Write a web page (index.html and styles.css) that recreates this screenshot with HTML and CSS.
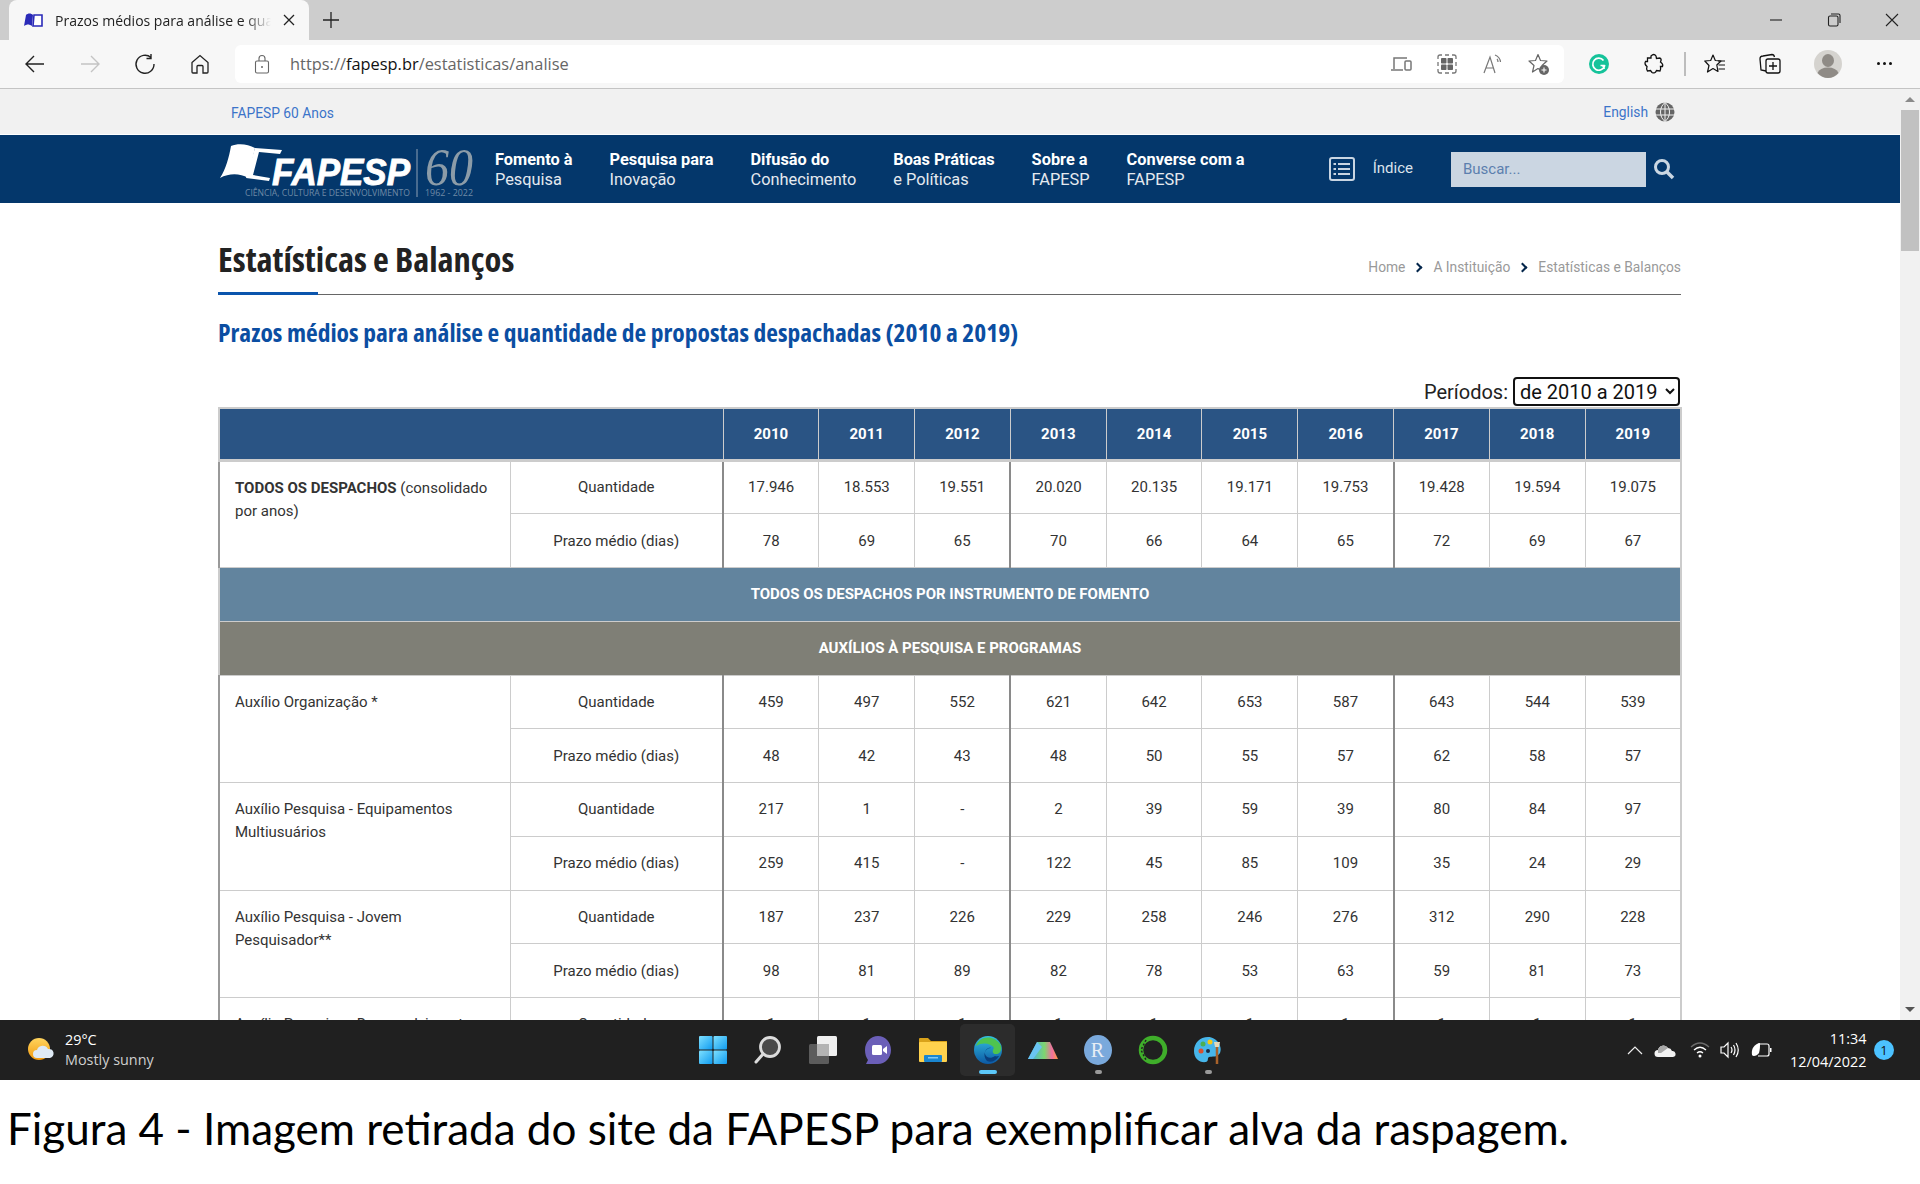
FILE: index.html
```html
<!DOCTYPE html>
<html lang="pt-BR">
<head>
  <meta charset="UTF-8" />
  <title>Prazos médios para análise e quantidade de propostas despachadas</title>
  <link rel="stylesheet" href="styles.css">
</head>
<body>
  <div class="tabstrip">
    <div class="tab">
      <svg class="favicon" viewBox="0 0 20 16"><path d="M1 14 3 3C5 1 8 1 10 3L9 14C6 12 4 12 1 14Z" fill="#2a2ab8"/><path d="M11 3H19V14H10Z" fill="#fff" stroke="#2a2ab8" stroke-width="1.6"/></svg>
      <span class="tab-title">Prazos médios para análise e quantidade</span>
      <svg class="ico12" viewBox="0 0 12 12"><path d="M1 1 11 11M11 1 1 11" stroke="#222" stroke-width="1.3"/></svg>
    </div>
    <svg class="newtab" viewBox="0 0 18 18"><path d="M9 1V17M1 9H17" stroke="#222" stroke-width="1.3"/></svg>
    <div class="win-btns">
      <svg class="ico14" viewBox="0 0 14 14"><path d="M1 7H13" stroke="#222" stroke-width="1.1"/></svg>
      <svg class="ico14" viewBox="0 0 14 14"><rect x="1.5" y="3" width="9.5" height="10" rx="1.5" fill="none" stroke="#222" stroke-width="1.1"/><path d="M4 1H11.5Q13 1 13 2.5V10" fill="none" stroke="#222" stroke-width="1.1"/></svg>
      <svg class="ico14" viewBox="0 0 14 14"><path d="M1 1 13 13M13 1 1 13" stroke="#222" stroke-width="1.1"/></svg>
    </div>
  </div>

  <div class="toolbar">
    <div class="nav-btns">
      <svg class="ico22" viewBox="0 0 22 22"><path d="M20 11H2M10 3 2 11 10 19" fill="none" stroke="#222" stroke-width="1.4"/></svg>
      <svg class="ico22" viewBox="0 0 22 22"><path d="M2 11H20M12 3 20 11 12 19" fill="none" stroke="#c4c4c4" stroke-width="1.4"/></svg>
      <svg class="ico22" viewBox="0 0 22 22"><path d="M17 4.5A9 9 0 1 0 20 11M17 1V5.5H12.5" fill="none" stroke="#222" stroke-width="1.4"/></svg>
      <svg class="ico22" viewBox="0 0 22 22"><path d="M3 9.5 11 2.5 19 9.5V19Q19 20 18 20H14V13.5Q14 12.5 13 12.5H9Q8 12.5 8 13.5V20H4Q3 20 3 19Z" fill="none" stroke="#222" stroke-width="1.3"/></svg>
    </div>
    <div class="addressbar">
      <svg class="lock" viewBox="0 0 16 20"><rect x="1.5" y="7" width="13" height="12" rx="1.5" fill="none" stroke="#666" stroke-width="1.1"/><path d="M5 7V4.5A3 3 0 0 1 11 4.5V7" fill="none" stroke="#666" stroke-width="1.1"/><circle cx="8" cy="13" r="1" fill="#666"/></svg>
      <span class="url">https://<b>fapesp.br</b>/estatisticas/analise</span>
      <div class="bar-icons">
        <svg class="ico22" viewBox="0 0 22 22"><path d="M4 16V5H17M1 17H13" fill="none" stroke="#777" stroke-width="1.5"/><rect x="15" y="8" width="6" height="9" rx="1" fill="none" stroke="#777" stroke-width="1.5"/></svg>
        <svg class="ico22" viewBox="0 0 22 22"><path d="M6 2H4Q2 2 2 4V6M16 2H18Q20 2 20 4V6M6 20H4Q2 20 2 18V16M16 20H18Q20 20 20 18V16M2 9V13M20 9V13M9 2H13M9 20H13" fill="none" stroke="#777" stroke-width="1.3"/><rect x="5" y="5" width="5.5" height="5.500" rx=".8" fill="#666"/><rect x="11.500" y="5" width="5.500" height="5.500" rx=".8" fill="#666"/><rect x="5" y="11.500" width="5.500" height="5.500" rx=".8" fill="#666"/><rect x="11.500" y="11.500" width="5.500" height="5.500" rx=".8" fill="#666"/></svg>
        <svg class="ico22" viewBox="0 0 22 22"><path d="M2 20 8 4 13 20M4 15H12" fill="none" stroke="#777" stroke-width="1.2"/><path d="M13 2Q18 4 18.500 9M15 6Q16 7 16 9" fill="none" stroke="#777" stroke-width="1.2"/></svg>
        <svg class="ico22" viewBox="0 0 22 22"><path d="M10 1.500 12.500 7.500 19 8 14 12.500 15.500 19 10 15.500 4.500 19 6 12.500 1 8 7.500 7.500Z" fill="#fff" stroke="#666" stroke-width="1.2" stroke-linejoin="round"/><circle cx="16" cy="17" r="5" fill="#666"/><path d="M16 14.500V19.500M13.500 17H18.500" stroke="#fff" stroke-width="1.1"/></svg>
      </div>
    </div>
    <div class="tool-icons">
      <svg class="ico22 grammarly" viewBox="0 0 22 22"><circle cx="11" cy="11" r="10" fill="#15c39a"/><path d="M15.500 7.500A6 6 0 1 0 16.500 13L14 13M16 16V12.500H12.500" fill="none" stroke="#fff" stroke-width="1.7"/></svg>
      <svg class="ico22 puzzle" viewBox="0 0 22 22"><path d="M8 3Q11 0 13 3L13.500 5.500 17 5Q19 6 17.500 9 20.500 11 19.500 13.500L17.500 13.500Q18 16 17 18L13.500 17.500Q12 21 9 19.500L7.500 17.500 4.500 18Q3 16 4 13.500 1 11 2.500 8.500L4.500 8.500 4.500 5 8 5Z" fill="none" stroke="#111" stroke-width="1.3"/></svg>
      <span class="tool-sep"></span>
      <svg class="ico22 favs" viewBox="0 0 22 22"><path d="M9 2 11.300 7.500 17 8 12.800 12 14 18.500 9 15.500 3.500 19 5 12.500 .8 8 6.700 7.500Z" fill="#f7f7f7" stroke="#111" stroke-width="1.2" stroke-linejoin="round"/><path d="M14 8H21M14.500 12H21M14.500 16H21" stroke="#111" stroke-width="1.2"/></svg>
      <svg class="ico22 colls" viewBox="0 0 22 22"><path d="M7 18 2 17 1 6Q1 3 4 3L13 1.500Q15 1.500 15.500 4" fill="none" stroke="#111" stroke-width="1.3"/><rect x="7" y="6" width="14" height="14" rx="2" fill="none" stroke="#111" stroke-width="1.3"/><path d="M14 9V17M10 13H18" stroke="#111" stroke-width="1.3"/></svg>
      <svg class="avatar" viewBox="0 0 28 28"><circle cx="14" cy="14" r="14" fill="#d5d3cf"/><ellipse cx="14" cy="10.500" rx="6" ry="6.500" fill="#8f8b86"/><path d="M3.500 23Q6 17.500 14 17.500T24.500 23Q20 28 14 28T3.500 23Z" fill="#8f8b86"/></svg>
      <span class="more"><i></i><i></i><i></i></span>
    </div>
  </div>

  <div class="viewport">
    <main class="page">
      <div class="topbar">
        <div class="wrap topbar-in">
          <a class="top-link">FAPESP 60 Anos</a>
          <span class="lang">
            <a class="top-link">English</a>
            <svg class="globe" viewBox="0 0 20 20"><circle cx="10" cy="10" r="9.500" fill="#666"/><path d="M0.500 7H19.500M0.500 13H19.500" stroke="#f1f1f1" stroke-width="1"/><path d="M10 .5V19.500M10 .5C4 5 4 15 10 19.500M10 .5C16 5 16 15 10 19.500" fill="none" stroke="#f1f1f1" stroke-width="1"/></svg>
          </span>
        </div>
      </div>

      <nav class="mainnav">
        <div class="wrap mainnav-in">
          <svg class="logo" viewBox="0 0 258 68">
            <path d="M2 43C8 34 11 22 13 11C20 8 30 9 37 13L30 43C22 38 11 38 2 43Z" fill="#fff"/>
            <path d="M37 13 64 15 62 19 41 17 35 40 52 43 51 46 28 43Z" fill="#fff"/>
            <text class="logo-name" x="54" y="50" textLength="138" lengthAdjust="spacingAndGlyphs">FAPESP</text>
            <text class="logo-tag" x="27" y="61" textLength="165" lengthAdjust="spacingAndGlyphs">CIÊNCIA, CULTURA E DESENVOLVIMENTO</text>
            <path d="M199 14V62" stroke="#8ea1b5" stroke-width="1"/>
            <text class="logo-sixty" x="207" y="50" textLength="48" lengthAdjust="spacingAndGlyphs">60</text>
            <text class="logo-tag" x="207" y="61" textLength="48" lengthAdjust="spacingAndGlyphs">1962 - 2022</text>
          </svg>
          <ul class="menu">
            <li><b>Fomento à</b><br>Pesquisa</li>
            <li><b>Pesquisa para</b><br>Inovação</li>
            <li><b>Difusão do</b><br>Conhecimento</li>
            <li><b>Boas Práticas</b><br>e Políticas</li>
            <li><b>Sobre a</b><br>FAPESP</li>
            <li><b>Converse com a</b><br>FAPESP</li>
          </ul>
          <div class="nav-tools">
            <svg class="index-ico" viewBox="0 0 26 24"><rect x="1" y="1" width="24" height="22" rx="2" fill="none" stroke="#c9d5e2" stroke-width="2"/><path d="M9 7H21M9 12H21M9 17H21M4.500 7H7M4.500 12H7M4.500 17H7" stroke="#c9d5e2" stroke-width="2.200"/></svg>
            <span class="index-txt">Índice</span>
            <input class="search" type="text" placeholder="Buscar...">
            <svg class="search-ico" viewBox="0 0 22 22"><circle cx="9" cy="9" r="6.500" fill="none" stroke="#cbd7e3" stroke-width="3"/><path d="M14 14 20 20" stroke="#cbd7e3" stroke-width="3.500"/></svg>
          </div>
        </div>
      </nav>

      <div class="wrap content">
        <div class="page-head">
          <h1>Estatísticas e Balanços</h1>
          <div class="crumbs">
            <span>Home</span><i class="chev"></i><span>A Instituição</span><i class="chev"></i><span>Estatísticas e Balanços</span>
          </div>
        </div>
        <h2>Prazos médios para análise e quantidade de propostas despachadas (2010 a 2019)</h2>
        <div class="periods">
          <label for="periodo">Períodos:</label>
          <select id="periodo"><option>de 2010 a 2019</option></select>
        </div>

        <table class="stats">
          <colgroup>
            <col class="c-name"><col class="c-kind">
            <col class="c-year"><col class="c-year"><col class="c-year"><col class="c-year"><col class="c-year">
            <col class="c-year"><col class="c-year"><col class="c-year"><col class="c-year"><col class="c-year">
          </colgroup>
          <thead>
            <tr>
              <th colspan="2"></th>
              <th>2010</th><th>2011</th><th>2012</th><th>2013</th><th>2014</th><th>2015</th><th>2016</th><th>2017</th><th>2018</th><th>2019</th>
            </tr>
          </thead>
          <tbody>
            <tr>
              <td class="name" rowspan="2"><b>TODOS OS DESPACHOS</b> (consolidado por anos)</td>
              <td>Quantidade</td>
              <td class="lead">17.946</td><td>18.553</td><td>19.551</td><td class="lead">20.020</td><td>20.135</td><td>19.171</td><td>19.753</td><td class="lead">19.428</td><td>19.594</td><td>19.075</td>
            </tr>
            <tr>
              <td>Prazo médio (dias)</td>
              <td class="lead">78</td><td>69</td><td>65</td><td class="lead">70</td><td>66</td><td>64</td><td>65</td><td class="lead">72</td><td>69</td><td>67</td>
            </tr>
            <tr class="band-blue"><td colspan="12">TODOS OS DESPACHOS POR INSTRUMENTO DE FOMENTO</td></tr>
            <tr class="band-grey"><td colspan="12">AUXÍLIOS À PESQUISA E PROGRAMAS</td></tr>
            <tr>
              <td class="name" rowspan="2">Auxílio Organização *</td>
              <td>Quantidade</td>
              <td class="lead">459</td><td>497</td><td>552</td><td class="lead">621</td><td>642</td><td>653</td><td>587</td><td class="lead">643</td><td>544</td><td>539</td>
            </tr>
            <tr>
              <td>Prazo médio (dias)</td>
              <td class="lead">48</td><td>42</td><td>43</td><td class="lead">48</td><td>50</td><td>55</td><td>57</td><td class="lead">62</td><td>58</td><td>57</td>
            </tr>
            <tr>
              <td class="name" rowspan="2">Auxílio Pesquisa - Equipamentos Multiusuários</td>
              <td>Quantidade</td>
              <td class="lead">217</td><td>1</td><td>-</td><td class="lead">2</td><td>39</td><td>59</td><td>39</td><td class="lead">80</td><td>84</td><td>97</td>
            </tr>
            <tr>
              <td>Prazo médio (dias)</td>
              <td class="lead">259</td><td>415</td><td>-</td><td class="lead">122</td><td>45</td><td>85</td><td>109</td><td class="lead">35</td><td>24</td><td>29</td>
            </tr>
            <tr>
              <td class="name" rowspan="2">Auxílio Pesquisa - Jovem Pesquisador**</td>
              <td>Quantidade</td>
              <td class="lead">187</td><td>237</td><td>226</td><td class="lead">229</td><td>258</td><td>246</td><td>276</td><td class="lead">312</td><td>290</td><td>228</td>
            </tr>
            <tr>
              <td>Prazo médio (dias)</td>
              <td class="lead">98</td><td>81</td><td>89</td><td class="lead">82</td><td>78</td><td>53</td><td>63</td><td class="lead">59</td><td>81</td><td>73</td>
            </tr>
            <tr>
              <td class="name" rowspan="2">Auxílio Pesquisa - Desenvolvimento</td>
              <td>Quantidade</td>
              <td class="lead">1</td><td>1</td><td>1</td><td class="lead">1</td><td>1</td><td>1</td><td>1</td><td class="lead">1</td><td>1</td><td>1</td>
            </tr>
          </tbody>
        </table>
      </div>
    </main>

    <div class="scrollbar">
      <span class="arrow-up"></span>
      <div class="track"><div class="thumb"></div></div>
      <span class="arrow-down"></span>
    </div>
  </div>

  <footer class="taskbar">
    <div class="weather">
      <svg class="sun" viewBox="0 0 28 28"><defs><linearGradient id="sunfill" x1="0" y1="0" x2="0" y2="1"><stop offset="0" stop-color="#ffd45e"/><stop offset="1" stop-color="#f29a0e"/></linearGradient></defs><circle cx="12" cy="13" r="11" fill="url(#sunfill)"/><path d="M10 22a4 4 0 0 1 0-8 6 6 0 0 1 11-1 4.500 4.500 0 0 1 2 9Z" fill="#dfeaf5"/></svg>
      <div>
        <div class="temp">29°C</div>
        <div class="cond">Mostly sunny</div>
      </div>
    </div>

    <div class="apps">
      <span class="app"><svg class="ico30" viewBox="0 0 30 30"><defs><linearGradient id="winfill" x1="0" y1="0" x2="1" y2="1"><stop offset="0" stop-color="#7ee0ff"/><stop offset="1" stop-color="#0f9bf0"/></linearGradient></defs><rect x="1" y="1" width="13.500" height="13.500" rx="1" fill="url(#winfill)"/><rect x="15.500" y="1" width="13.500" height="13.500" rx="1" fill="url(#winfill)"/><rect x="1" y="15.500" width="13.500" height="13.500" rx="1" fill="url(#winfill)"/><rect x="15.500" y="15.500" width="13.500" height="13.500" rx="1" fill="url(#winfill)"/></svg></span>
      <span class="app"><svg class="ico30" viewBox="0 0 30 30"><circle cx="17" cy="12" r="9.500" fill="#4a4a4a" stroke="#dcdcdc" stroke-width="2.800"/><path d="M10 19 3 27" stroke="#dcdcdc" stroke-width="3" stroke-linecap="round"/></svg></span>
      <span class="app"><svg class="ico30" viewBox="0 0 30 30"><rect x="9" y="1" width="20" height="20" rx="1.500" fill="#f0f0f0"/><rect x="1" y="9" width="20" height="20" rx="1.500" fill="#5c5c5c"/><rect x="9" y="9" width="12" height="12" fill="#b4b4b4"/></svg></span>
      <span class="app"><svg class="ico30" viewBox="0 0 30 30"><path d="M15 1C22 1 28 7 28 15S22 29 15 29H3L5 25C3 22 2 19 2 15 2 7 8 1 15 1Z" fill="#6b5fb8"/><rect x="9" y="10" width="10" height="10" rx="1.500" fill="#fff"/><path d="M20 14 24 11V19L20 16Z" fill="#fff"/></svg></span>
      <span class="app"><svg class="ico30" viewBox="0 0 30 30"><path d="M1 4Q1 3 2 3H10L13 6H29V12H1Z" fill="#d9a21a"/><rect x="1" y="7" width="28" height="20" rx="1" fill="#ffd24d"/><rect x="6" y="20" width="18" height="7" rx="1" fill="#1a86d0"/><rect x="10" y="22" width="10" height="1.500" fill="#7ec8f5"/></svg></span>
      <span class="app app-on"><svg class="ico30" viewBox="0 0 30 30"><defs><linearGradient id="edgeb" x1="0" y1="0" x2="0" y2="1"><stop offset="0" stop-color="#33bfe0"/><stop offset="1" stop-color="#0c59a4"/></linearGradient></defs><circle cx="15" cy="15" r="14" fill="url(#edgeb)"/><path d="M3 11C6 1 20 -1 27 9 30 14 27 19 23 19 18 19 20 14 21 13 18 8 9 7 3 11Z" fill="#4fc44f"/><path d="M22 21C18 24 13 23 12 19 11 15 16 12 18 13 12 13 9 20 14 26 18 28 23 26 26 21 25 21 23 22 22 21Z" fill="#0a3f7d"/></svg><i class="run run-on"></i></span>
      <span class="app"><svg class="ico30" viewBox="0 0 30 24"><defs><linearGradient id="prism" x1="0" y1="0" x2="1" y2="0"><stop offset="0" stop-color="#3fa9f5"/><stop offset=".55" stop-color="#7ed56f"/><stop offset=".8" stop-color="#f06fa0"/><stop offset="1" stop-color="#ff9a3c"/></linearGradient></defs><path d="M9 4H22L30 21H0Z" fill="url(#prism)"/><path d="M9 4 14 9 5 21H0Z" fill="#6ac4f2"/></svg></span>
      <span class="app"><span class="r-ico">R</span><i class="run"></i></span>
      <span class="app"><svg class="ico30" viewBox="0 0 30 30"><circle cx="15" cy="15" r="12" fill="none" stroke="#3fae2a" stroke-width="4.500"/><path d="M8 5 3 15 8 25" fill="none" stroke="#202020" stroke-width="1.500" stroke-dasharray="2 2"/></svg></span>
      <span class="app"><svg class="ico30" viewBox="0 0 30 30"><path d="M15 2C7 2 1 8 1 16S7 28 13 27C16 26 14 23 16 22 19 21 24 23 27 18 30 12 24 2 15 2Z" fill="#47b6ea"/><circle cx="8" cy="16" r="2.500" fill="#d9502e"/><circle cx="10" cy="9" r="2.500" fill="#4caf50"/><circle cx="17" cy="7" r="2.500" fill="#f6c915"/><circle cx="15" cy="16" r="2" fill="#1b2b45"/><path d="M24 11V29" stroke="#a8622a" stroke-width="2.500"/><path d="M21 7H27L26 12H22Z" fill="#e6d9b8"/></svg><i class="run"></i></span>
    </div>

    <div class="tray">
      <svg class="ico18" viewBox="0 0 18 18"><path d="M2 13 9 6 16 13" fill="none" stroke="#eee" stroke-width="1.200"/></svg>
      <svg class="ico22" viewBox="0 0 22 16"><path d="M4 15a3.500 3.500 0 0 1 0-7 5.500 5.500 0 0 1 10-2 4.500 4.500 0 0 1 4 3 3 3 0 0 1 1 6Z" fill="#f2f2f2"/><path d="M4 8a5.500 5.500 0 0 1 10-2L7 11H4Z" fill="#a9a9a9"/></svg>
      <svg class="ico20 tray-wifi" viewBox="0 0 20 18"><path d="M1 6Q10 -2 19 6" fill="none" stroke="#6c6c6c" stroke-width="1.200"/><path d="M4 9Q10 3.500 16 9M7 12Q10 9.500 13 12" fill="none" stroke="#fff" stroke-width="1.300"/><circle cx="10" cy="15" r="1.500" fill="#fff"/></svg>
      <svg class="ico20" viewBox="0 0 20 18"><path d="M1 6H4L8 2V16L4 12H1Z" fill="none" stroke="#fff" stroke-width="1.200"/><path d="M11 6Q13 9 11 12M13.500 4Q16.500 9 13.500 14M16 2Q20.500 9 16 16" fill="none" stroke="#fff" stroke-width="1.200"/></svg>
      <svg class="ico22" viewBox="0 0 22 18"><path d="M8 3H17Q19 3 19 5V13Q19 15 17 15H8" fill="none" stroke="#fff" stroke-width="1.200"/><path d="M20 7H21.500V11H20" fill="#fff"/><path d="M10 2C4 3 1 8 2 14 3 16 7 15 9 12 10 9 10 5 10 2Z" fill="#fff"/></svg>
      <div class="clock"><div>11:34</div><div>12/04/2022</div></div>
      <span class="badge">1</span>
    </div>
  </footer>

  <p class="caption">Figura 4 - Imagem retirada do site da FAPESP para exemplificar alva da raspagem.</p>
</body>
</html>
```

FILE: styles.css
```css
* {
  box-sizing: border-box;
}
html, body {
  margin: 0;
  padding: 0;
}
body {
  width: 1920px;
  height: 1184px;
  overflow: hidden;
  display: flex;
  flex-direction: column;
  background: #fff;
  font-family: Roboto, sans-serif;
  color: #333;
}
svg {
  display: block;
  flex: none;
}
.ico12 { width: 12px; height: 12px; }
.ico14 { width: 14px; height: 14px; }
.ico18 { width: 18px; height: 18px; }
.ico20 { width: 20px; height: 18px; }
.ico22 { width: 22px; height: 22px; }
.ico30 { width: 30px; height: 30px; }

/* browser chrome */
.tabstrip {
  height: 40px;
  flex: none;
  background: #cdcdcd;
  display: flex;
  align-items: center;
  padding-left: 9px;
}
.tab {
  width: 300px;
  height: 40px;
  background: #f7f7f7;
  border-radius: 8px 8px 0 0;
  display: flex;
  align-items: center;
  padding: 0 14px;
  gap: 12px;
}
.favicon {
  width: 20px;
  height: 16px;
}
.tab-title {
  flex: 1;
  font-family: "Open Sans", sans-serif;
  font-size: 14px;
  color: #222;
  white-space: nowrap;
  overflow: hidden;
  -webkit-mask-image: linear-gradient(to right, #000 88%, transparent);
  mask-image: linear-gradient(to right, #000 88%, transparent);
}
.newtab {
  width: 18px;
  height: 18px;
  margin-left: 13px;
}
.win-btns {
  margin-left: auto;
  display: flex;
  gap: 44px;
  padding-right: 21px;
}
.toolbar {
  height: 49px;
  flex: none;
  background: #f7f7f7;
  border-bottom: 1px solid #c4c4c4;
  display: flex;
  align-items: center;
  padding-bottom: 1px;
}
.nav-btns {
  width: 235px;
  display: flex;
  gap: 33px;
  padding-left: 24px;
}
.addressbar {
  width: 1329px;
  height: 38px;
  background: #fff;
  border-radius: 6px;
  display: flex;
  align-items: center;
  padding: 0 14px 0 19px;
}
.lock {
  width: 16px;
  height: 20px;
}
.url {
  margin-left: 20px;
  font-family: "Open Sans", sans-serif;
  font-size: 16.400px;
  color: #666;
}
.url b {
  font-weight: 400;
  color: #111;
}
.bar-icons {
  margin-left: auto;
  display: flex;
  gap: 24px;
}
.tool-icons {
  flex: 1;
  display: flex;
  align-items: center;
  padding-left: 24px;
}
.puzzle { margin-left: 33px; }
.tool-sep {
  width: 2px;
  height: 24px;
  background: #bdbdbd;
  margin-left: 19px;
}
.favs { margin-left: 18px; }
.colls { margin-left: 33px; }
.avatar {
  width: 28px;
  height: 28px;
  margin-left: 33px;
}
.more {
  display: flex;
  gap: 3px;
  margin-left: 35px;
}
.more i {
  width: 3px;
  height: 3px;
  border-radius: 50%;
  background: #111;
}

/* page */
.viewport {
  flex: 1;
  min-height: 0;
  display: flex;
  overflow: hidden;
}
.page {
  flex: 1;
  min-width: 0;
  overflow: hidden;
}
.wrap {
  width: 1463px;
  margin-left: 218px;
}
.topbar {
  height: 46px;
  background: #f1f1f1;
  border-bottom: 1px solid #fff;
}
.topbar-in {
  height: 45px;
  display: flex;
  align-items: center;
  justify-content: space-between;
  padding-left: 13px;
  padding-right: 6px;
}
.top-link {
  font-size: 13.800px;
  color: #3b74c9;
}
.topbar-in > .top-link {
  margin-top: 2px;
}
.lang {
  display: flex;
  align-items: center;
  gap: 7px;
}
.globe {
  width: 20px;
  height: 20px;
}
.mainnav {
  height: 68px;
  background: #04376b;
}
.mainnav-in {
  height: 68px;
  display: flex;
  align-items: center;
}
.logo {
  width: 258px;
  height: 68px;
}
.logo-name {
  font-family: "Liberation Sans", sans-serif;
  font-weight: 700;
  font-style: italic;
  font-size: 36px;
  fill: #fff;
  stroke: #fff;
  stroke-width: .9px;
}
.logo-tag {
  font-family: "Open Sans", sans-serif;
  font-size: 9px;
  fill: #6f8aa6;
}
.logo-sixty {
  font-family: "Liberation Serif", serif;
  font-style: italic;
  font-size: 52px;
  fill: #8c9ca8;
}
.menu {
  list-style: none;
  margin: 2px 0 0 19px;
  padding: 0;
  display: flex;
  gap: 37px;
  font-size: 16.350px;
  line-height: 20px;
  color: #e4e9ef;
  white-space: nowrap;
}
.menu b {
  color: #fff;
}
.nav-tools {
  margin-left: auto;
  display: flex;
  align-items: center;
  padding-right: 6px;
}
.index-ico {
  width: 26px;
  height: 24px;
}
.index-txt {
  margin: -2px 0 0 18px;
  font-size: 15px;
  color: #dbe3ec;
}
.search {
  width: 195px;
  height: 35px;
  margin-left: 38px;
  border: none;
  background: #cbd6e2;
  padding: 0 12px;
  font-family: Roboto, sans-serif;
  font-size: 15px;
}
.search::placeholder {
  color: #5c7fae;
}
.search-ico {
  width: 22px;
  height: 22px;
  margin-left: 7px;
}
.page-head {
  height: 92px;
  display: flex;
  align-items: flex-end;
  justify-content: space-between;
  border-bottom: 1px solid #666;
  position: relative;
}
.page-head::after {
  content: "";
  position: absolute;
  left: 0;
  bottom: -1px;
  width: 100px;
  height: 3px;
  background: #0b55ad;
}
h1 {
  margin: 0 0 13px;
  font-family: "Open Sans", sans-serif;
  font-stretch: 84%;
  font-weight: 700;
  font-size: 34.500px;
  line-height: 44px;
  color: #222;
}
.crumbs {
  display: flex;
  align-items: center;
  gap: 12px;
  margin-bottom: 19px;
  font-size: 13.800px;
  color: #999;
}
.chev {
  width: 7px;
  height: 7px;
  border-top: 2.500px solid #04264b;
  border-right: 2.500px solid #04264b;
  transform: rotate(45deg);
  margin-left: -3px;
}
h2 {
  margin: 20px 0 0;
  font-family: "Open Sans", sans-serif;
  font-stretch: 86%;
  font-weight: 700;
  font-size: 25.500px;
  line-height: 34px;
  color: #0b4ea2;
}
.periods {
  margin-top: 27px;
  height: 31px;
  padding-right: 1px;
  display: flex;
  justify-content: flex-end;
  align-items: center;
  gap: 5px;
  font-size: 20px;
  color: #222;
}
.periods select {
  width: 167px;
  height: 29px;
  border: 2px solid #111;
  border-radius: 4px;
  background: #fff;
  font-family: Roboto, sans-serif;
  font-size: 20px;
  color: #111;
  padding: 0 0 0 1px;
}

/* table */
.stats {
  width: 1462px;
  table-layout: fixed;
  border-collapse: collapse;
  border: 2px solid #ccc;
  font-size: 15px;
  color: #333;
}
.c-name { width: 291px; }
.c-kind { width: 213px; }
.c-year { width: 95.800px; }
.stats th {
  height: 52px;
  background: #2a5484;
  color: #fff;
  font-size: 15px;
  font-weight: 700;
  border: 1px solid #ccc;
  border-bottom-width: 3px;
}
.stats td {
  height: 53.750px;
  border: 1px solid #ccc;
  text-align: center;
  padding: 0;
}
.stats td.lead {
  border-left: 2px solid #8a8a8a;
}
.stats td.name {
  border-left: 2px solid #999;
  text-align: left;
  vertical-align: top;
  padding: 15px 15px 0;
  line-height: 23px;
}
.stats .band-blue td,
.stats .band-grey td {
  color: #fff;
  font-size: 15px;
  font-weight: 700;
}
.stats .band-blue td { background: #62849e; }
.stats .band-grey td { background: #7f7f76; }

/* scrollbar */
.scrollbar {
  width: 20px;
  flex: none;
  background: #f1f1f1;
  display: flex;
  flex-direction: column;
  align-items: center;
}
.arrow-up, .arrow-down {
  height: 20px;
  width: 0;
  flex: none;
  border-left: 5px solid transparent;
  border-right: 5px solid transparent;
}
.arrow-up {
  border-bottom: 5px solid #8a8a8a;
  height: 0;
  margin: 8px 0 8px;
}
.arrow-down {
  border-top: 5px solid #555;
  height: 0;
  margin: 8px 0 8px;
}
.track {
  flex: 1;
  width: 100%;
}
.thumb {
  width: 18px;
  height: 141px;
  margin: 0 1px;
  background: #c1c1c1;
}

/* taskbar */
.taskbar {
  height: 60px;
  flex: none;
  background: #202020;
  display: grid;
  grid-template-columns: 1fr auto 1fr;
  align-items: center;
  color: #fff;
}
.weather {
  display: flex;
  align-items: center;
  padding-left: 27px;
  gap: 10px;
  font-family: "Open Sans", sans-serif;
  font-size: 14.400px;
  line-height: 20px;
}
.sun {
  width: 28px;
  height: 28px;
}
.cond {
  color: #cfcfcf;
}
.apps {
  display: flex;
}
.app {
  width: 55px;
  height: 52px;
  display: flex;
  align-items: center;
  justify-content: center;
  position: relative;
}
.app-on {
  background: #2c2c2c;
  border-radius: 5px;
}
.run {
  position: absolute;
  left: 50%;
  bottom: 2px;
  width: 7px;
  height: 4px;
  margin-left: -3px;
  border-radius: 2px;
  background: #9a9a9a;
}
.run-on {
  width: 18px;
  margin-left: -9px;
  background: #5cc8fa;
}
.r-ico {
  width: 28px;
  height: 30px;
  border-radius: 50%;
  background: #7aa9dc;
  color: #e8eef5;
  font-family: "Liberation Serif", serif;
  font-size: 20px;
  line-height: 30px;
  text-align: center;
}
.tray {
  display: flex;
  align-items: center;
  justify-content: flex-end;
  gap: 10px;
  padding-right: 26px;
}
.tray-wifi {
  margin-left: 4px;
}
.clock {
  margin-left: 8px;
  font-family: "Open Sans", sans-serif;
  font-size: 14.400px;
  line-height: 23px;
  text-align: right;
}
.badge {
  width: 20px;
  height: 20px;
  margin-left: -2.500px;
  border-radius: 50%;
  background: #4cc2ff;
  color: #111;
  font-family: "Open Sans", sans-serif;
  font-size: 13px;
  line-height: 20px;
  text-align: center;
}

/* caption under the picture */
.caption {
  margin: 0;
  height: 104px;
  flex: none;
  padding: 18px 0 0 7px;
  font-family: Lato, sans-serif;
  font-size: 44px;
  line-height: 60px;
  color: #000;
  white-space: nowrap;
}
```
